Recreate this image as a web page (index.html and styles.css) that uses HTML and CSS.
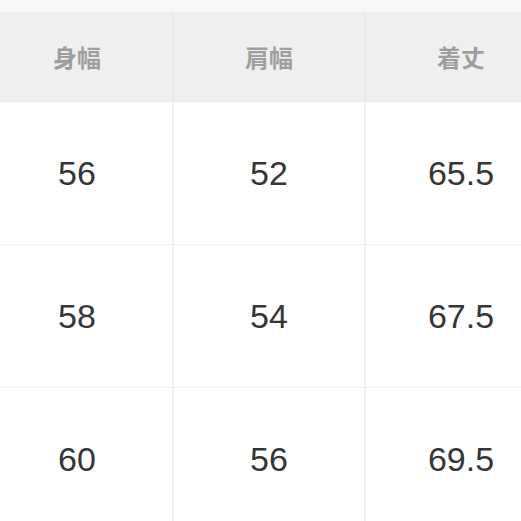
FILE: index.html
```html
<!DOCTYPE html>
<html lang="ja">
<head>
<meta charset="utf-8">
<link rel="stylesheet" href="styles.css">
</head>
<body>
<div class="page">
  <div class="table">
    <div class="row head">
      <div class="cell">身幅</div>
      <div class="cell">肩幅</div>
      <div class="cell">着丈</div>
    </div>
    <div class="row">
      <div class="cell">56</div>
      <div class="cell">52</div>
      <div class="cell">65.5</div>
    </div>
    <div class="row">
      <div class="cell">58</div>
      <div class="cell">54</div>
      <div class="cell">67.5</div>
    </div>
    <div class="row">
      <div class="cell">60</div>
      <div class="cell">56</div>
      <div class="cell">69.5</div>
    </div>
  </div>
</div>
</body>
</html>
```
FILE: styles.css
```css
html, body {
  margin: 0;
  padding: 0;
  background: #ffffff;
  overflow: hidden;
}
.page {
  width: 521px;
  height: 521px;
  overflow: hidden;
  background: #f8f8f8;
  padding-top: 12px;
  box-sizing: border-box;
}
.table {
  margin-left: -18px;
  width: 576px;
  background: #ffffff;
}
.row {
  display: grid;
  grid-template-columns: 192px 192px 192px;
  height: 142px;
  border-bottom: 1px solid #efefef;
}
.row.head {
  height: 89px;
  background: #efefef;
  border-bottom: 1px solid #e9e9e9;
}
.cell {
  display: flex;
  align-items: center;
  justify-content: center;
  border-right: 2px solid #f1f1f1;
  font-family: "Liberation Sans", Arial, sans-serif;
  font-size: 34px;
  color: #363636;
}
.head .cell {
  font-family: "Noto Sans CJK JP", sans-serif;
  font-size: 24px;
  font-weight: 700;
  color: #9e9e9e;
  border-right: 2px solid #e9e9e9;
}
```
